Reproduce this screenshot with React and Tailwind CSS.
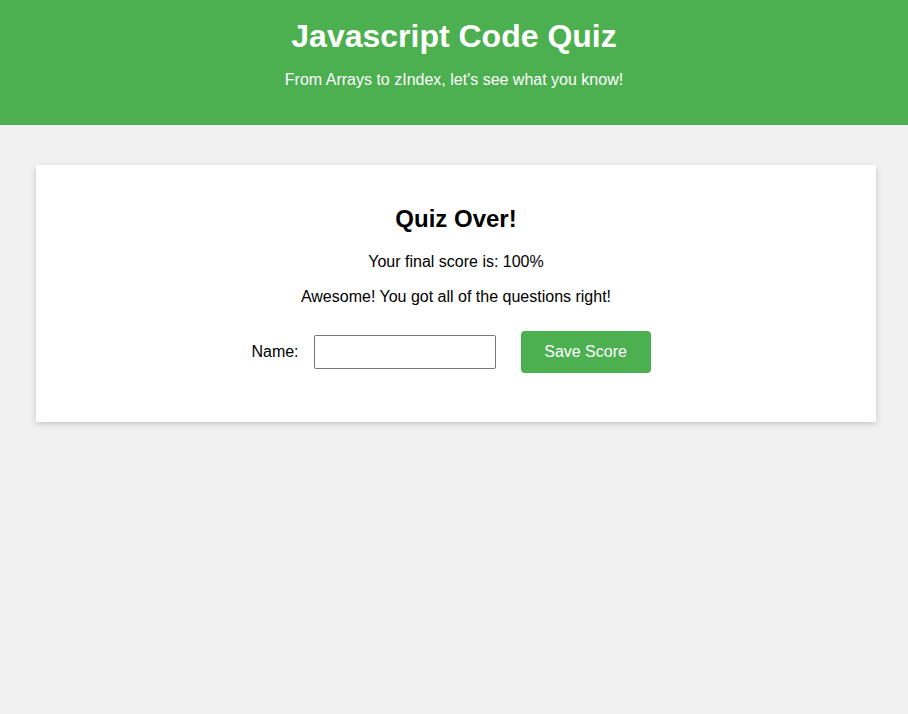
export default function App() {
  return (
    <div className="min-h-[714px] bg-[#f1f1f1] font-['Liberation_Sans',Arial,sans-serif] text-black">
      <header className="h-[125px] bg-[#4caf50] pt-[18px] text-center text-white">
        <h1 className="text-[32px] font-bold leading-[37px]">Javascript Code Quiz</h1>
        <p className="mt-[16px] text-[16px] leading-[18px]">From Arrays to zIndex, let's see what you know!</p>
      </header>

      <main className="ml-[36px] mr-[32px] mt-[40px] bg-white pt-[40px] pb-[49px] text-center shadow-[0_2px_6px_rgba(0,0,0,0.18)]">
        <h2 className="text-[24px] font-bold leading-[28px]">Quiz Over!</h2>
        <p className="mt-[20px] text-[16px] leading-[18px]">Your final score is: 100%</p>
        <p className="mt-[17px] text-[16px] leading-[18px]">Awesome! You got all of the questions right!</p>

        <div className="mt-[25px] flex items-center justify-center pr-[10px]">
          <label htmlFor="name" className="text-[16px] leading-[18px]">Name:</label>
          <input
            id="name"
            type="text"
            className="ml-[15px] h-[34px] w-[182px] rounded-[2px] border border-[#767676] bg-white px-2 text-[16px] outline-none"
          />
          <button className="ml-[25px] h-[42px] w-[130px] rounded-[4px] bg-[#4caf50] text-[16px] text-white">
            Save Score
          </button>
        </div>
      </main>
    </div>
  )
}
